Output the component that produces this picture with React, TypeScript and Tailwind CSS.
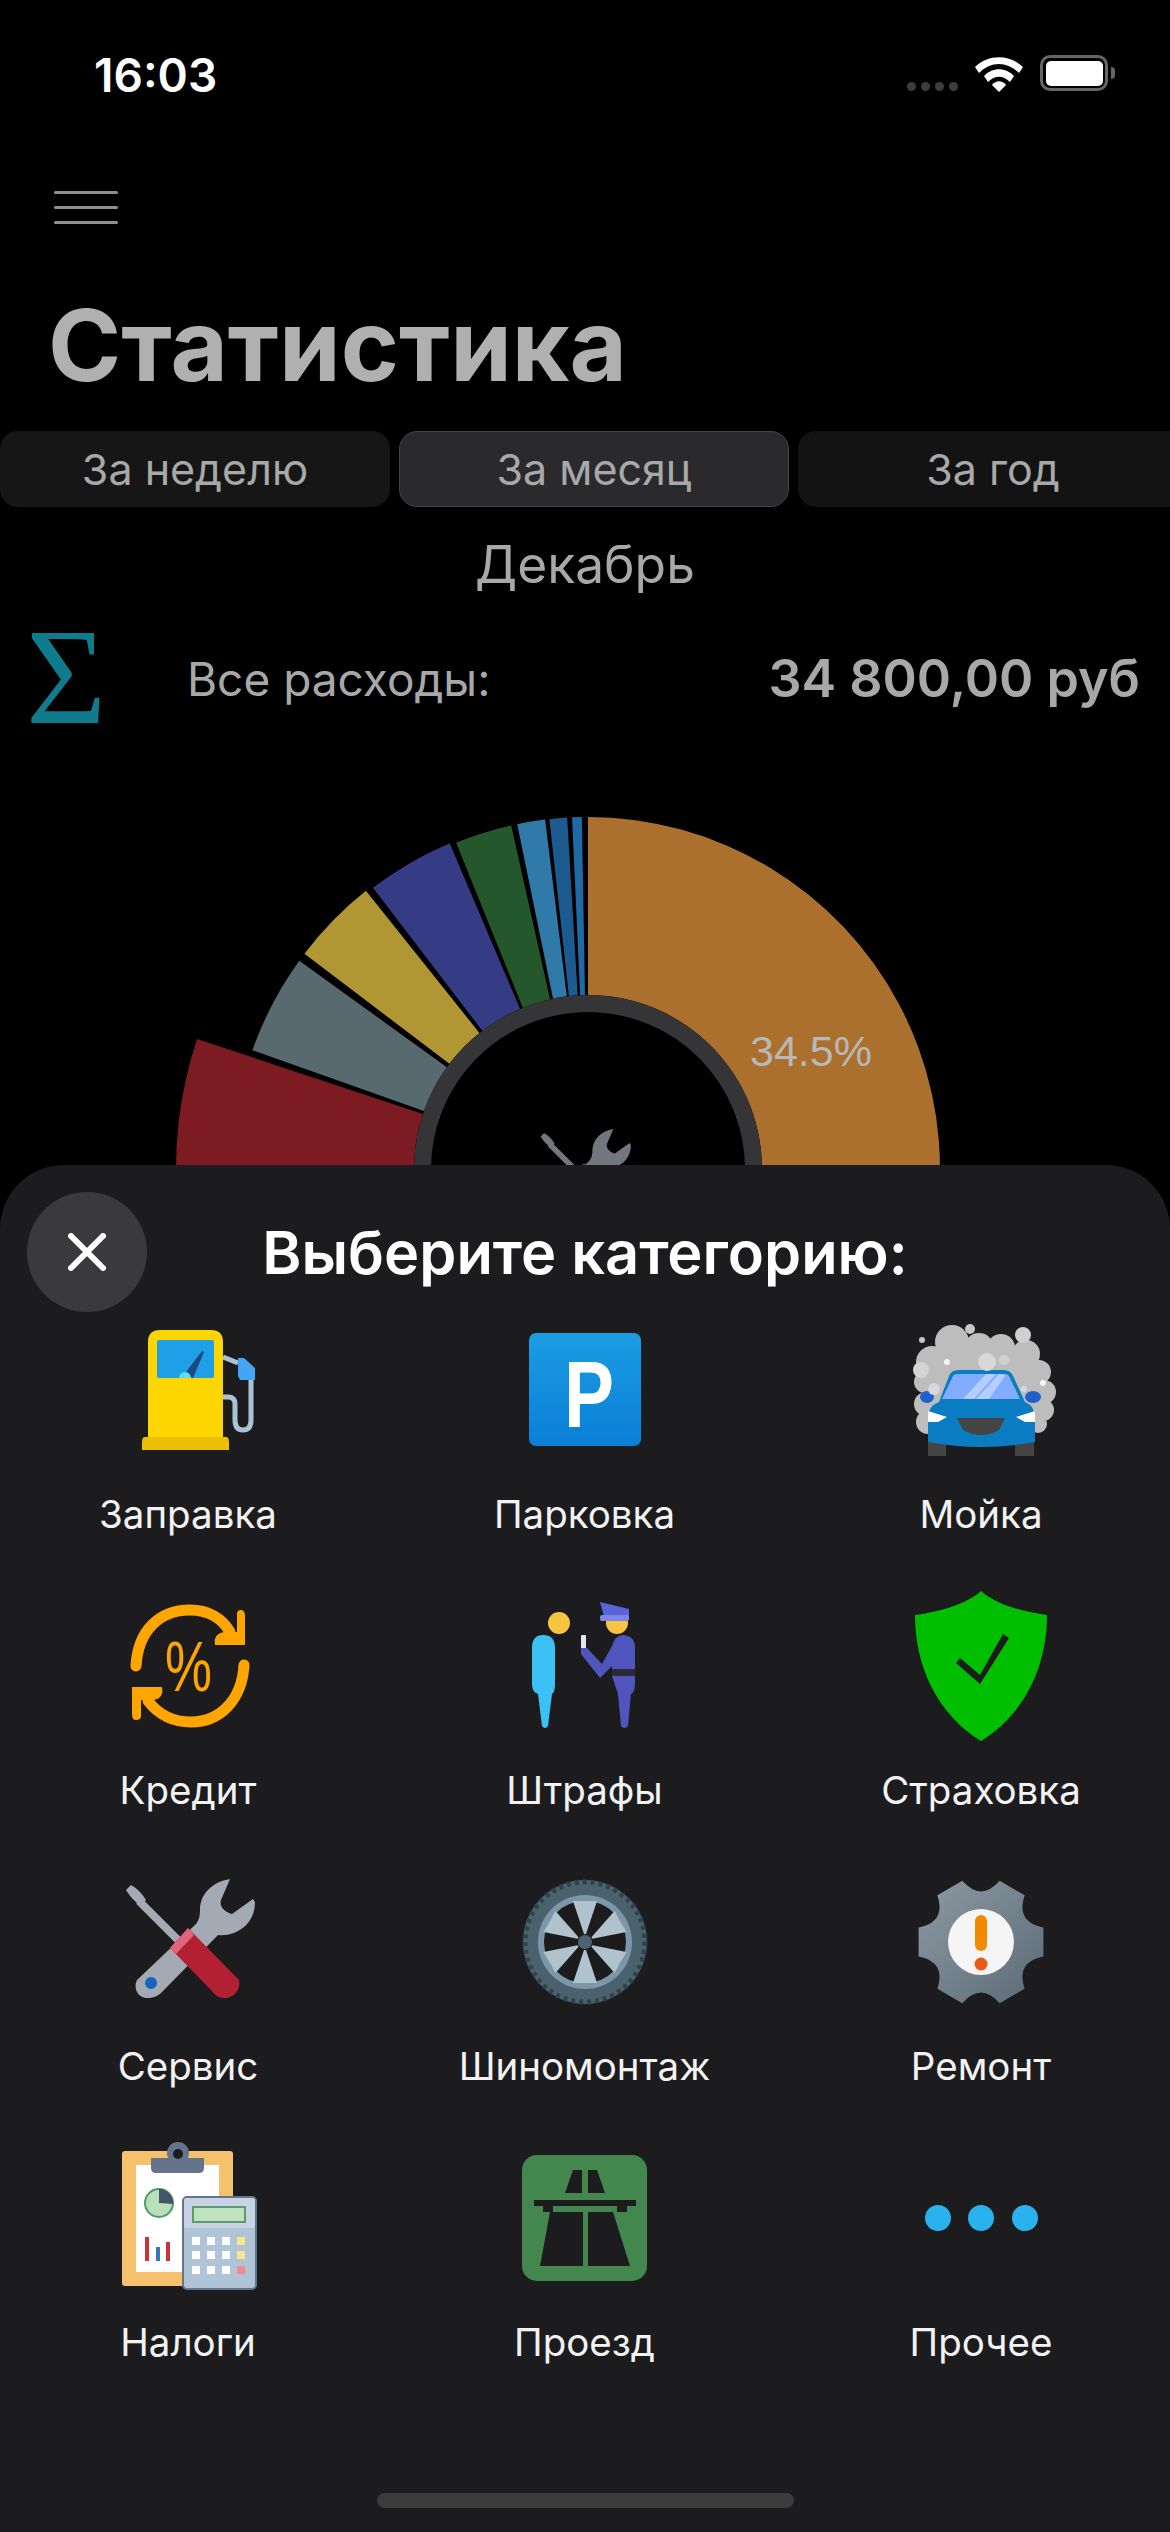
const font = { fontFamily: "Inter, 'Noto Sans', sans-serif" };

function point(angle: number, r: number, cx = 588, cy = 408) {
  const a = (angle * Math.PI) / 180;
  return `${(cx + r * Math.sin(a)).toFixed(2)} ${(cy - r * Math.cos(a)).toFixed(2)}`;
}

function sector(a0: number, a1: number, r0: number, r1: number) {
  const large = a1 - a0 > 180 ? 1 : 0;
  return `M${point(a0, r0)} L${point(a0, r1)} A${r1} ${r1} 0 ${large} 1 ${point(a1, r1)} L${point(a1, r0)} A${r0} ${r0} 0 ${large} 0 ${point(a0, r0)} Z`;
}

const slices = [
  { from: 0, to: 124.2, r: 352, color: "#ab702d" },
  { from: -2.6, to: -1, r: 352, color: "#1f6aa5" },
  { from: -6.3, to: -3.4, r: 352, color: "#1c5a8f" },
  { from: -11.6, to: -7, r: 352, color: "#2f7aa9" },
  { from: -22, to: -12.6, r: 352, color: "#25572c" },
  { from: -37.4, to: -23, r: 354, color: "#353b85" },
  { from: -52.8, to: -38.6, r: 356, color: "#b09734" },
  { from: -70.5, to: -54.2, r: 356, color: "#58696f" },
  { from: -120, to: -71.6, r: 412, color: "#7d1b23" },
];

function ToolsGlyph() {
  return (
    <>
      <path d="M18 28 L23 23 Q32 28 38 38 L33 44 Q24 38 18 28 Z" fill="#a3aab3" />
      <path d="M31 39 L76 84" stroke="#a3aab3" strokeWidth="8" fill="none" />
      <path d="M122 17 C104 20 92 32 92 48 C92 54 91 58 88 62 L29 118 C25 126 30 136 39 136 C45 136 50 134 53 131 L110 73 C126 75 147 64 147 40 L145 37 L124 52 C116 50 111 44 113 38 Z" fill="#a3aab3" />
      <path d="M80 66 L131 118 C133 128 126 136 116 136 C110 136 106 132 104 129 L62 86 Z" fill="#b32033" />
      <path d="M80 66 L86 73 L68 92 L62 86 Z" fill="#e0647a" />
      <circle cx="43" cy="121" r="6" fill="#1565c0" />
    </>
  );
}

function Fuel() {
  return (
    <>
      <path d="M115 47 L130 53" stroke="#a9c2d6" strokeWidth="5" fill="none" />
      <path d="M115 87 H120 Q127 87 127 94 V110 Q127 120 135 120 Q143 120 143 110 V68" stroke="#a9c2d6" strokeWidth="5" fill="none" />
      <path d="M130 48 H136 L147 58 V70 H132 L130 66 Z" fill="#42a5f5" />
      <path d="M40 127 V32 Q40 20 52 20 H103 Q115 20 115 32 V127 Z" fill="#fdd600" />
      <path d="M37 127 H118 Q121 127 121 132 V140 H34 V132 Q34 127 37 127 Z" fill="#ecc000" />
      <rect x="49" y="30" width="57" height="38" rx="2" fill="#1e9fe6" />
      <path d="M75 66 L94 41 L96 42 L85 68 Z" fill="#1c4a80" />
      <path d="M71 68 A6 6 0 0 1 83 68 Z" fill="#5ce1f2" />
    </>
  );
}

function Parking() {
  return (
    <>
      <defs>
        <linearGradient id="parkingBlue" x1="0" y1="0" x2="0" y2="1">
          <stop offset="0" stopColor="#1b9de2" />
          <stop offset="1" stopColor="#0a7fd8" />
        </linearGradient>
      </defs>
      <rect x="24" y="23" width="112" height="113" rx="7" fill="url(#parkingBlue)" />
      <text
        x="59"
        y="117"
        fontSize="94"
        fontWeight="700"
        fill="#fff"
        textLength="50"
        lengthAdjust="spacingAndGlyphs"
        fontFamily="'Liberation Sans', sans-serif"
      >
        P
      </text>
    </>
  );
}

function CarWash() {
  const foam = [
    [51, 32, 17], [78, 38, 15], [100, 38, 14], [125, 44, 14], [31, 52, 16], [138, 62, 12], [24, 72, 11],
    [143, 82, 12], [25, 94, 12], [142, 100, 11], [27, 112, 12], [137, 114, 9], [80, 80, 48],
  ];
  return (
    <>
      {foam.map(([x, y, r], i) => (
        <circle key={i} cx={x} cy={y} r={r} fill="#bdbdbd" />
      ))}
      <rect x="30" y="42" width="108" height="80" fill="#bdbdbd" />
      <circle cx="20" cy="60" r="8" fill="#d4d4d4" />
      <circle cx="122" cy="25" r="8" fill="#d0d0d0" />
      <circle cx="69" cy="19" r="5" fill="#c6c6c6" />
      <circle cx="21" cy="30" r="3" fill="#c6c6c6" />
      <path d="M27 130 H45 V146 H27 Z M114 130 H133 V146 H114 Z" fill="#444444" />
      <ellipse cx="26" cy="87" rx="7" ry="6" fill="#1f5fcf" />
      <ellipse cx="132" cy="87" rx="8" ry="6" fill="#1f5fcf" />
      <path d="M38 92 L48 66 Q50 60 58 60 H102 Q110 60 112 66 L124 92 Q134 96 134 108 V132 Q80 142 27 132 V108 Q27 96 38 92 Z" fill="#0a7cc2" />
      <path d="M41 89 L52 66 Q53 64 57 64 H104 Q107 64 108 66 L119 89 Z" fill="#82acff" />
      <path d="M62 89 L85 64 H95 L73 89 Z M75 89 L98 64 H103 L104 66 L88 89 Z" fill="#b4ceff" />
      <path d="M27 101 L46 107 L37 112 H27 Z M134 101 L115 107 L124 112 H134 Z" fill="#fff" />
      <path d="M56 108 H104 L98 120 Q80 130 62 120 Z" fill="#444444" />
      <circle cx="86" cy="52" r="9" fill="#d8d8d8" />
      <circle cx="103" cy="50" r="5" fill="#d0d0d0" />
      <circle cx="46" cy="52" r="3" fill="#f4f4f4" />
      <circle cx="142" cy="73" r="3" fill="#f4f4f4" />
      <circle cx="33" cy="79" r="6" fill="#d8d8d8" />
      <circle cx="123" cy="79" r="3" fill="#d8d8d8" />
    </>
  );
}

function Credit() {
  return (
    <>
      <path d="M28 80 C30 44 52 24 82 24 C100 24 114 32 122 46" stroke="#ffa500" strokeWidth="11" strokeLinecap="round" fill="none" />
      <path d="M133 24 Q137 24 137 30 V59 H107 Q105 48 116 46 L129 46 V28 Q129 24 133 24 Z" fill="#ffa500" />
      <path d="M136 79 C134 114 112 136 83 136 C64 136 50 128 40 115" stroke="#ffa500" strokeWidth="11" strokeLinecap="round" fill="none" />
      <path d="M28 134 Q24 134 24 128 V101 H54 Q56 112 46 114 L33 114 V130 Q33 134 28 134 Z" fill="#ffa500" />
      <text
        x="57"
        y="105"
        fontSize="70"
        fontWeight="500"
        fill="#ffa500"
        textLength="47"
        lengthAdjust="spacingAndGlyphs"
        fontFamily="'Liberation Sans', sans-serif"
      >
        %
      </text>
    </>
  );
}

function Fines() {
  return (
    <>
      <circle cx="54" cy="37" r="11" fill="#f7c542" />
      <path d="M27 62 Q27 49 38 49 Q50 49 50 62 V98 Q50 106 47 108 L43 140 Q40 144 37 140 L33 108 Q27 106 27 98 Z" fill="#3cc1f5" />
      <circle cx="112" cy="37" r="11" fill="#f7c542" />
      <path d="M95 16 L124 23 V34 H100 Z" fill="#5865d8" />
      <rect x="95" y="29" width="29" height="6" rx="2" fill="#7c86ee" />
      <rect x="76" y="49" width="5" height="14" rx="1" fill="#dfe8f2" />
      <path d="M76 62 L82 62 L97 78 L107 60 Q110 49 118 49 Q130 50 130 62 V98 Q130 106 126 108 L123 140 Q119 144 116 140 L113 108 L107 90 V80 L95 92 L76 68 Z" fill="#4f55bd" />
      <rect x="107" y="83" width="23" height="7" fill="#2a2a3a" />
    </>
  );
}

function Shield() {
  return (
    <>
      <path d="M80 5 C94 18 122 26 146 29 C146 80 124 128 80 155 C36 128 14 80 14 29 C38 26 66 18 80 5 Z" fill="#00bf00" />
      <path d="M55 77 L59 72 L79 89 L102 48 L108 52 L79 98 Z" fill="#1c1c1e" />
    </>
  );
}

function Wheel() {
  const spokes = [0, 60, 120, 180, 240, 300];
  return (
    <>
      <circle cx="80" cy="80" r="62" fill="#4a616e" />
      <circle cx="80" cy="80" r="60" fill="none" stroke="#2f424d" strokeWidth="5" strokeDasharray="4 4" />
      <circle cx="80" cy="80" r="47" fill="#7b97a8" />
      <circle cx="80" cy="80" r="41" fill="#1c1c1e" />
      {spokes.map((a) => (
        <path key={a} transform={`rotate(${a} 80 80)`} d="M79 72 L68 39 H92 L81 72 Z" fill="#b0c2cc" />
      ))}
      <circle cx="80" cy="80" r="7" fill="#4c6470" />
    </>
  );
}

function gearPath() {
  const at = (deg: number, r: number) => {
    const a = (deg * Math.PI) / 180;
    return `${(80 + r * Math.cos(a)).toFixed(1)} ${(80 + r * Math.sin(a)).toFixed(1)}`;
  };
  let d = "";
  for (let i = 0; i < 6; i++) {
    const a = i * 60;
    d += `${i === 0 ? "M" : "L"}${at(a - 13, 64)} L${at(a + 13, 64)} Q${at(a + 30, 40)} ${at(a + 47, 64)} `;
  }
  return d + "Z";
}

function Gear() {
  return (
    <>
      <defs>
        <linearGradient id="gearGray" x1="0" y1="0" x2="1" y2="1">
          <stop offset="0" stopColor="#8e9aa3" />
          <stop offset="1" stopColor="#5a6a76" />
        </linearGradient>
      </defs>
      <path d={gearPath()} fill="url(#gearGray)" />
      <circle cx="80" cy="80" r="33" fill="#f5f5f5" />
      <rect x="74" y="53" width="12" height="36" rx="6" fill="#f28a00" />
      <circle cx="80" cy="102" r="6.5" fill="#e8591a" />
    </>
  );
}

function Taxes() {
  const cols = [88, 103, 118, 133];
  const rows = [103, 117, 132];
  return (
    <>
      <rect x="14" y="13" width="111" height="135" rx="3" fill="#f5c16c" />
      <rect x="28" y="27" width="83" height="107" fill="#ffffff" />
      <circle cx="70" cy="15" r="11" fill="#64748b" />
      <path d="M43 20 H96 V30 Q96 35 91 35 H48 Q43 35 43 30 Z" fill="#64748b" />
      <circle cx="70" cy="16" r="5" fill="#1c1c1e" />
      <circle cx="51" cy="65" r="14" fill="#b9e0b9" stroke="#4c9a6a" strokeWidth="2" />
      <path d="M51 51 A14 14 0 0 1 65 66 L51 65 Z" fill="#44546a" />
      <rect x="37" y="99" width="4" height="24" fill="#c9343a" />
      <rect x="48" y="109" width="4" height="14" fill="#3f72bf" />
      <rect x="58" y="104" width="4" height="19" fill="#c9343a" />
      <rect x="75" y="59" width="73" height="92" rx="4" fill="#b0c4d8" stroke="#64748b" strokeWidth="2" />
      <rect x="76" y="60" width="71" height="30" rx="3" fill="#c8d4e4" />
      <rect x="85" y="69" width="52" height="15" fill="#bfe3bf" stroke="#5d9a70" strokeWidth="2" />
      {rows.map((y, r) =>
        cols.map((x, c) => (
          <rect
            key={`${r}-${c}`}
            x={x - 4}
            y={y - 4}
            width="8"
            height="8"
            fill={c < 3 ? "#ffffff" : r === 2 ? "#f08a8f" : "#f8e58a"}
          />
        ))
      )}
    </>
  );
}

function Road() {
  return (
    <>
      <rect x="17" y="17" width="125" height="126" rx="15" fill="#43874f" />
      <path d="M68 32 H77 V55 H60 Z M83 32 H92 L100 55 H83 Z" fill="#1c1c1e" />
      <rect x="29" y="62" width="102" height="6" fill="#1c1c1e" />
      <rect x="38" y="68" width="10" height="6" fill="#1c1c1e" />
      <rect x="112" y="68" width="10" height="6" fill="#1c1c1e" />
      <path d="M45 74 H78 V128 H35 Z M83 74 H108 L125 128 H83 Z" fill="#1c1c1e" />
    </>
  );
}

function Other() {
  return (
    <>
      <circle cx="37" cy="80" r="13" fill="#29b2ee" />
      <circle cx="80" cy="80" r="13" fill="#29b2ee" />
      <circle cx="124" cy="80" r="13" fill="#29b2ee" />
    </>
  );
}

const categories = [
  { label: "Заправка", icon: <Fuel /> },
  { label: "Парковка", icon: <Parking /> },
  { label: "Мойка", icon: <CarWash /> },
  { label: "Кредит", icon: <Credit /> },
  { label: "Штрафы", icon: <Fines /> },
  { label: "Страховка", icon: <Shield /> },
  { label: "Сервис", icon: <ToolsGlyph /> },
  { label: "Шиномонтаж", icon: <Wheel /> },
  { label: "Ремонт", icon: <Gear /> },
  { label: "Налоги", icon: <Taxes /> },
  { label: "Проезд", icon: <Road /> },
  { label: "Прочее", icon: <Other /> },
];

function StatusBar() {
  return (
    <div className="flex h-[146px] items-center justify-between pl-[94px] pr-[55px]">
      <span className="mt-[4px] text-[46px] font-semibold text-white">16:03</span>
      <div className="flex items-center">
        <div className="mt-[27px] flex gap-[5px]">
          {[0, 1, 2, 3].map((i) => (
            <div key={i} className="h-[9px] w-[9px] rounded-full bg-[#3d3d3d]" />
          ))}
        </div>
        <svg width="50" height="37" viewBox="0 0 50 37" className="ml-[16px]">
          <path d="M1 12 C14 -1 36 -1 49 12 L45 18 C33 6 17 6 5 18 Z" fill="#fff" />
          <path d="M10 21 C18 12 32 12 40 21 L36 27 C29 20 21 20 14 27 Z" fill="#fff" />
          <path d="M18 30 C22 25 28 25 32 30 L25 37 Z" fill="#fff" />
        </svg>
        <div className="ml-[16px] flex h-[36px] w-[68px] items-center justify-center rounded-[10px] border-[3px] border-[#666666]">
          <div className="h-[25px] w-[57px] rounded-[5px] bg-white" />
        </div>
        <div className="ml-[3px] h-[12px] w-[4px] rounded-r-full bg-[#666666]" />
      </div>
    </div>
  );
}

export default function App() {
  return (
    <div className="relative h-[2532px] w-[1170px] overflow-hidden bg-black" style={font}>
      <StatusBar />

      <div className="ml-[54px] mt-[45px] flex w-[64px] flex-col gap-[12px]">
        <div className="h-[3px] rounded-full bg-[#8f8f8f]" />
        <div className="h-[3px] rounded-full bg-[#8f8f8f]" />
        <div className="h-[3px] rounded-full bg-[#8f8f8f]" />
      </div>

      <h1 className="ml-[48px] mt-[61px] h-[120px] text-[99px] font-bold leading-[120px] text-[#b0b0b0]">Статистика</h1>

      <div className="mt-[26px] flex gap-[9px] text-[43px] leading-[76px] text-[#a8a8a8]">
        <div className="h-[76px] w-[390px] shrink-0 rounded-[18px] bg-[#161616] text-center">За неделю</div>
        <div className="h-[76px] w-[390px] shrink-0 rounded-[18px] border border-[#444446] bg-[#2a2a2c] text-center leading-[74px]">
          За месяц
        </div>
        <div className="h-[76px] w-[390px] shrink-0 rounded-[18px] bg-[#131313] text-center">За год</div>
      </div>

      <div className="mt-[27px] h-[60px] text-center text-[51.5px] leading-[60px] text-[#a8a8a8]">Декабрь</div>

      <div className="mt-[55px] flex h-[60px] items-center pl-[26px] pr-[30px]">
        <span
          className="-mt-[4px] w-[161px] text-[138px] leading-[60px] text-[#0e7c8c]"
          style={{ fontFamily: "'Liberation Serif', serif" }}
        >
          Σ
        </span>
        <span className="text-[46px] text-[#a8a8a8]">Все расходы:</span>
        <span className="ml-auto text-[52px] font-semibold text-[#a8a8a8]">34 800,00 руб</span>
      </div>

      <svg width="1170" height="420" viewBox="0 0 1170 420" className="mt-[52px] block">
        {slices.map((s) => (
          <path key={s.color} d={sector(s.from, s.to, 174, s.r)} fill={s.color} />
        ))}
        <circle cx="588" cy="408" r="165.5" fill="#000" stroke="#353537" strokeWidth="17" />
        <text x="811" y="305" textAnchor="middle" fontSize="43" fill="#b8b8b8" fontFamily="'Liberation Sans', sans-serif">
          34.5%
        </text>
        <g transform="translate(528 356) scale(.7)" opacity="0.7">
          <ToolsGlyph />
        </g>
      </svg>

      <div className="absolute left-0 top-[1165px] h-[1367px] w-full rounded-t-[64px] bg-[#1c1c1e]">
        <button
          type="button"
          aria-label="Закрыть"
          className="absolute left-[27px] top-[27px] flex h-[120px] w-[120px] items-center justify-center rounded-full bg-[#3a3a3c]"
        >
          <svg width="38" height="38" viewBox="0 0 38 38">
            <path d="M3 3 L35 35 M35 3 L3 35" stroke="#fff" strokeWidth="6" strokeLinecap="round" />
          </svg>
        </button>

        <h2 className="h-[145px] pt-[52px] text-center text-[59.5px] font-semibold leading-[70px] text-white">
          Выберите категорию:
        </h2>

        <div className="grid grid-cols-[repeat(3,160px)] gap-x-[236.5px] pl-[108px]">
          {categories.map((c) => (
            <div key={c.label} className="flex h-[276px] flex-col items-center">
              <svg width="160" height="160" viewBox="0 0 160 160" className="shrink-0">
                {c.icon}
              </svg>
              <span className="mt-[21px] whitespace-nowrap text-[38.5px] leading-[46px] text-[#f2f2f2]">{c.label}</span>
            </div>
          ))}
        </div>

        <div className="absolute bottom-[24px] left-[377px] h-[15px] w-[417px] rounded-full bg-[#3c3c3c]" />
      </div>
    </div>
  );
}
